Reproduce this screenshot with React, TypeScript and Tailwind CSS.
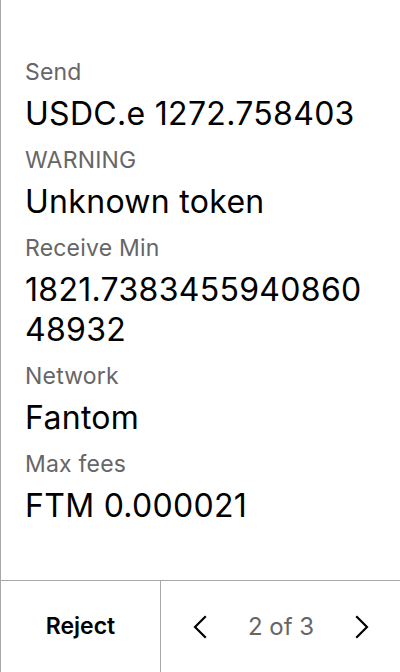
const rows: { label: string; value: string }[] = [
  { label: 'Send', value: 'USDC.e 1272.758403' },
  { label: 'WARNING', value: 'Unknown token' },
  { label: 'Receive Min', value: '1821.738345594086048932' },
  { label: 'Network', value: 'Fantom' },
  { label: 'Max fees', value: 'FTM 0.000021' },
];

function Chevron({ dir }: { dir: 'left' | 'right' }) {
  return (
    <svg width="16" height="24" viewBox="0 0 16 24" fill="none" className="block">
      <path
        d={dir === 'left' ? 'M13 2 L3 12 L13 22' : 'M3 2 L13 12 L3 22'}
        stroke="#000"
        strokeWidth="2.2"
        strokeLinecap="square"
      />
    </svg>
  );
}

export default function App() {
  return (
    <main className="w-[400px] h-[672px] bg-white border-l border-[#a8a8a8] flex flex-col font-['Inter',sans-serif] text-black">
      {/* Review fields */}
      <div className="flex-1 flex flex-col gap-3 pl-6 pr-[28px] pt-[58px]">
        {rows.map((r) => (
          <div key={r.label} className="flex flex-col gap-2">
            <div className="text-[23px] leading-[28px] tracking-[0.2px] text-[#666]">{r.label}</div>
            <div className="text-[32px] leading-[40px] tracking-[0.3px] break-all">{r.value}</div>
          </div>
        ))}
      </div>

      {/* Footer */}
      <div className="h-[92px] border-t border-[#a8a8a8] flex">
        <button className="w-[160px] border-r border-[#a8a8a8] flex items-center justify-center text-[23px] font-semibold">
          Reject
        </button>
        <div className="flex-1 flex items-center justify-between pl-[31px] pr-[30px]">
          <Chevron dir="left" />
          <span className="text-[24px] text-[#666]">2 of 3</span>
          <Chevron dir="right" />
        </div>
      </div>
    </main>
  );
}
